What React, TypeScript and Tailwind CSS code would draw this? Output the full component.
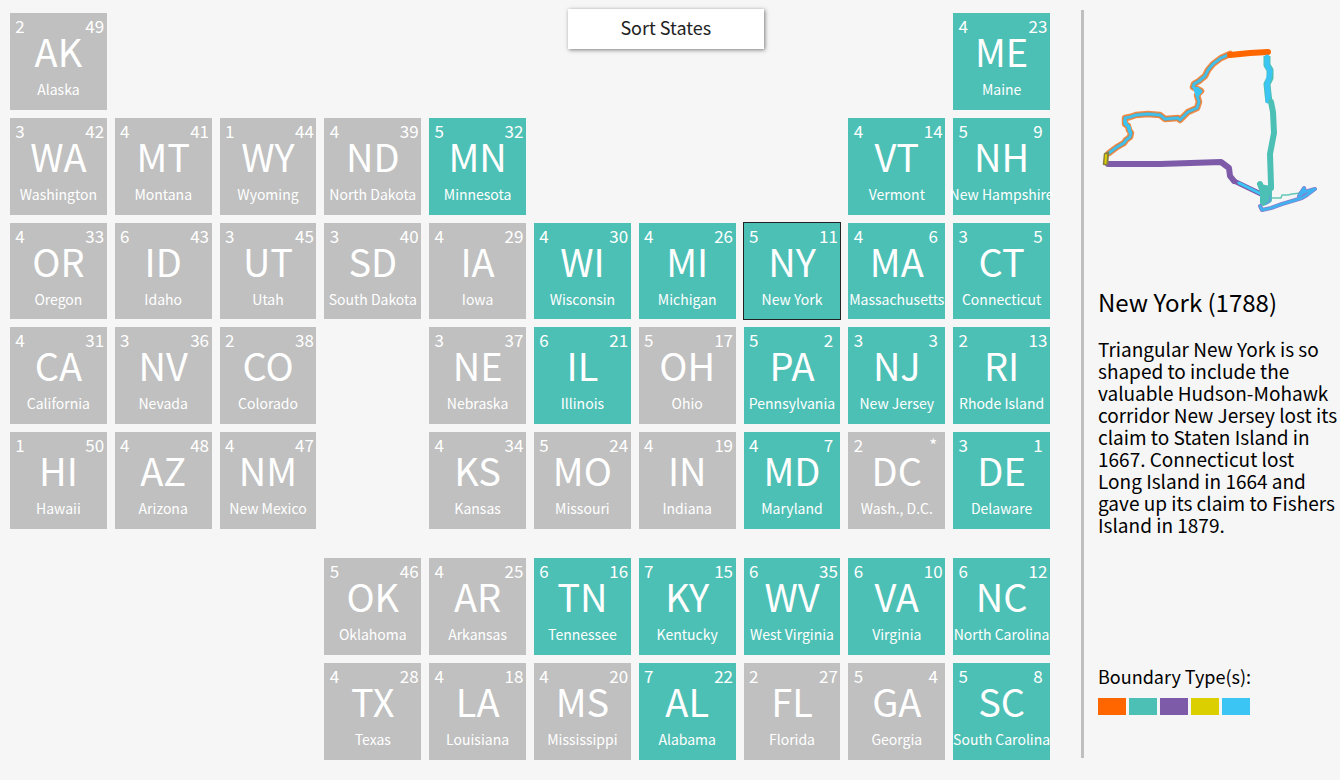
import React, { useState } from 'react';

type StateTile = {
  abbr: string;
  name: string;
  sides: number;
  order: string;
  row: number;
  col: number;
  active?: boolean;
};

const colStart = [
  'col-start-1',
  'col-start-2',
  'col-start-3',
  'col-start-4',
  'col-start-5',
  'col-start-6',
  'col-start-7',
  'col-start-8',
  'col-start-9',
  'col-start-10',
];

const rowStart = [
  'row-start-1',
  'row-start-2',
  'row-start-3',
  'row-start-4',
  'row-start-5',
];

const mainland: StateTile[] = [
  { abbr: 'AK', name: 'Alaska', sides: 2, order: '49', row: 1, col: 1 },
  { abbr: 'ME', name: 'Maine', sides: 4, order: '23', row: 1, col: 10, active: true },
  { abbr: 'WA', name: 'Washington', sides: 3, order: '42', row: 2, col: 1 },
  { abbr: 'MT', name: 'Montana', sides: 4, order: '41', row: 2, col: 2 },
  { abbr: 'WY', name: 'Wyoming', sides: 1, order: '44', row: 2, col: 3 },
  { abbr: 'ND', name: 'North Dakota', sides: 4, order: '39', row: 2, col: 4 },
  { abbr: 'MN', name: 'Minnesota', sides: 5, order: '32', row: 2, col: 5, active: true },
  { abbr: 'VT', name: 'Vermont', sides: 4, order: '14', row: 2, col: 9, active: true },
  { abbr: 'NH', name: 'New Hampshire', sides: 5, order: '9', row: 2, col: 10, active: true },
  { abbr: 'OR', name: 'Oregon', sides: 4, order: '33', row: 3, col: 1 },
  { abbr: 'ID', name: 'Idaho', sides: 6, order: '43', row: 3, col: 2 },
  { abbr: 'UT', name: 'Utah', sides: 3, order: '45', row: 3, col: 3 },
  { abbr: 'SD', name: 'South Dakota', sides: 3, order: '40', row: 3, col: 4 },
  { abbr: 'IA', name: 'Iowa', sides: 4, order: '29', row: 3, col: 5 },
  { abbr: 'WI', name: 'Wisconsin', sides: 4, order: '30', row: 3, col: 6, active: true },
  { abbr: 'MI', name: 'Michigan', sides: 4, order: '26', row: 3, col: 7, active: true },
  { abbr: 'NY', name: 'New York', sides: 5, order: '11', row: 3, col: 8, active: true },
  { abbr: 'MA', name: 'Massachusetts', sides: 4, order: '6', row: 3, col: 9, active: true },
  { abbr: 'CT', name: 'Connecticut', sides: 3, order: '5', row: 3, col: 10, active: true },
  { abbr: 'CA', name: 'California', sides: 4, order: '31', row: 4, col: 1 },
  { abbr: 'NV', name: 'Nevada', sides: 3, order: '36', row: 4, col: 2 },
  { abbr: 'CO', name: 'Colorado', sides: 2, order: '38', row: 4, col: 3 },
  { abbr: 'NE', name: 'Nebraska', sides: 3, order: '37', row: 4, col: 5 },
  { abbr: 'IL', name: 'Illinois', sides: 6, order: '21', row: 4, col: 6, active: true },
  { abbr: 'OH', name: 'Ohio', sides: 5, order: '17', row: 4, col: 7 },
  { abbr: 'PA', name: 'Pennsylvania', sides: 5, order: '2', row: 4, col: 8, active: true },
  { abbr: 'NJ', name: 'New Jersey', sides: 3, order: '3', row: 4, col: 9, active: true },
  { abbr: 'RI', name: 'Rhode Island', sides: 2, order: '13', row: 4, col: 10, active: true },
  { abbr: 'HI', name: 'Hawaii', sides: 1, order: '50', row: 5, col: 1 },
  { abbr: 'AZ', name: 'Arizona', sides: 4, order: '48', row: 5, col: 2 },
  { abbr: 'NM', name: 'New Mexico', sides: 4, order: '47', row: 5, col: 3 },
  { abbr: 'KS', name: 'Kansas', sides: 4, order: '34', row: 5, col: 5 },
  { abbr: 'MO', name: 'Missouri', sides: 5, order: '24', row: 5, col: 6 },
  { abbr: 'IN', name: 'Indiana', sides: 4, order: '19', row: 5, col: 7 },
  { abbr: 'MD', name: 'Maryland', sides: 4, order: '7', row: 5, col: 8, active: true },
  { abbr: 'DC', name: 'Wash., D.C.', sides: 2, order: '*', row: 5, col: 9 },
  { abbr: 'DE', name: 'Delaware', sides: 3, order: '1', row: 5, col: 10, active: true },
];

const south: StateTile[] = [
  { abbr: 'OK', name: 'Oklahoma', sides: 5, order: '46', row: 1, col: 4 },
  { abbr: 'AR', name: 'Arkansas', sides: 4, order: '25', row: 1, col: 5 },
  { abbr: 'TN', name: 'Tennessee', sides: 6, order: '16', row: 1, col: 6, active: true },
  { abbr: 'KY', name: 'Kentucky', sides: 7, order: '15', row: 1, col: 7, active: true },
  { abbr: 'WV', name: 'West Virginia', sides: 6, order: '35', row: 1, col: 8, active: true },
  { abbr: 'VA', name: 'Virginia', sides: 6, order: '10', row: 1, col: 9, active: true },
  { abbr: 'NC', name: 'North Carolina', sides: 6, order: '12', row: 1, col: 10, active: true },
  { abbr: 'TX', name: 'Texas', sides: 4, order: '28', row: 2, col: 4 },
  { abbr: 'LA', name: 'Louisiana', sides: 4, order: '18', row: 2, col: 5 },
  { abbr: 'MS', name: 'Mississippi', sides: 4, order: '20', row: 2, col: 6 },
  { abbr: 'AL', name: 'Alabama', sides: 7, order: '22', row: 2, col: 7, active: true },
  { abbr: 'FL', name: 'Florida', sides: 2, order: '27', row: 2, col: 8 },
  { abbr: 'GA', name: 'Georgia', sides: 5, order: '4', row: 2, col: 9 },
  { abbr: 'SC', name: 'South Carolina', sides: 5, order: '8', row: 2, col: 10, active: true },
];

const boundaryColors = [
  'bg-[#ff6600]',
  'bg-[#4dc0b5]',
  'bg-[#7d5ba9]',
  'bg-[#dccf00]',
  'bg-[#3bc5f5]',
];

// Lake Erie, Niagara, Lake Ontario and the St. Lawrence, west to east
const lakeShore =
  'M9 123L17 117L24 113L26 110L30 107L31 103L29 100L28 96L25 94L25 88L30 87L36 85L48 84L60 85L65 89L78 88L80 90L84 86L88 82L97 78L99 72L97 65L101 61L93 57L94 54L99 51L105 46L108 40L113 34L121 28L130 24';

const longIsland =
  'M160 176L162 180L171 178L182 174L192 171L202 168L207 165L215 159L208 161L200 164L204 158L205 161L199 166';

const Tile = ({
  state,
  selected,
  onSelect,
}: {
  state: StateTile;
  selected: boolean;
  onSelect: (abbr: string) => void;
}) => (
  <button
    type="button"
    aria-pressed={selected}
    onClick={() => onSelect(state.abbr)}
    className={`${colStart[state.col - 1]} ${rowStart[state.row - 1]} flex aspect-square min-w-0 flex-col items-center pt-1 text-white ${
      state.active ? 'bg-[#4dc0b5]' : 'bg-[#c0c0c0]'
    } ${selected ? 'outline outline-[#222]' : ''}`}
  >
    <span className="flex w-full justify-between pr-0.5 pl-1 text-[17px] leading-[18px]">
      <span className="w-3 text-center">{state.sides}</span>
      <span className="w-5 text-center">{state.order}</span>
    </span>
    <span className="text-[38px] leading-8">{state.abbr}</span>
    <span className="mt-3 text-sm leading-5 whitespace-nowrap">
      {state.name}
    </span>
  </button>
);

const NewYorkOutline = () => (
  <svg
    viewBox="0 0 240 200"
    className="w-full"
    fill="none"
    strokeLinecap="round"
    strokeLinejoin="round"
    role="img"
    aria-label="Outline of New York"
  >
    <path d={lakeShore} stroke="#f58a42" strokeWidth="6.5" />
    <path d={lakeShore} stroke="#8d9388" strokeWidth="3.8" />
    <path d={lakeShore} stroke="#3fc2ee" strokeWidth="2.4" />
    <path
      d="M94 58L98 58L101 62L97 67Z"
      fill="#3bc5f5"
      stroke="#3bc5f5"
      strokeWidth="2"
    />
    <path d="M25 91L26 94L29 97L30 102" stroke="#3bc5f5" strokeWidth="3.5" />
    {/* Northern line */}
    <path d="M130 25L150 23L168 22" stroke="#ff6600" strokeWidth="6" />
    {/* Lake Champlain and the eastern border */}
    <path
      d="M167 26L167 35L170 40L170 48L167 54L168 64L169 72"
      stroke="#4dc0b5"
      strokeWidth="7"
      strokeLinecap="butt"
    />
    <path
      d="M167 27L167 35L170 41L169 48L167 54L168 64L168 71"
      stroke="#3bc5f5"
      strokeWidth="5"
    />
    <path
      d="M171 72L173 82L174 103L170 124L171 155L171 158"
      stroke="#4dc0b5"
      strokeWidth="6"
    />
    {/* Pennsylvania line */}
    <path
      d="M8 134L60 134L121 132L125 135L129 138L130 146L134 151"
      stroke="#7d5ba9"
      strokeWidth="6"
    />
    <path d="M134 151L161 164" stroke="#7d5ba9" strokeWidth="5" />
    <path d="M139 153L161 164" stroke="#3bc5f5" strokeWidth="3" />
    {/* Erie triangle */}
    <path
      d="M5 124L8 123L7 134L4 134Z"
      fill="#dccf00"
      stroke="#8a8043"
      strokeWidth="2.5"
    />
    <path d="M6 125L5.5 133" stroke="#dccf00" strokeWidth="2" />
    {/* New York harbour */}
    <path
      d="M160 154L163 162L163 173L169 170L169 160L171 156"
      fill="#4dc0b5"
      stroke="#4dc0b5"
      strokeWidth="6"
    />
    <path d="M170 167L170 171L166 174" stroke="#5aa5d8" strokeWidth="2" />
    {/* Long Island */}
    <path
      d="M172 168L181 168L182 165L188 165L192 164L201 163"
      stroke="#63c7b7"
      strokeWidth="1.5"
    />
    <path d={longIsland} stroke="#8a7dcc" strokeWidth="4" />
    <path d={longIsland} stroke="#3fb3f0" strokeWidth="2.4" />
  </svg>
);

const App = () => {
  const [selected, setSelected] = useState('NY');
  const [faded, setFaded] = useState(false);

  const renderTile = (state: StateTile) => (
    <Tile
      key={state.abbr}
      state={faded ? { ...state, active: false } : state}
      selected={selected === state.abbr}
      onSelect={setSelected}
    />
  );

  return (
    <div className="flex min-h-screen w-full bg-[#f6f6f6] font-['Noto_Sans_CJK_SC',sans-serif]">
      <main className="min-w-0 flex-1 pt-[13px] pr-[31px] pb-5 pl-2.5">
        <div className="grid grid-cols-10 gap-2">
          <button
            type="button"
            onClick={() => setFaded((prev) => !prev)}
            className="col-span-2 col-start-6 row-start-1 -mt-1 -mr-7 ml-[34px] h-10 self-start bg-white pb-1 text-lg text-[#222] shadow-[1px_1px_4px_rgba(0,0,0,0.5)]"
          >
            Sort States
          </button>
          {mainland.map(renderTile)}
        </div>
        <div className="mt-[29px] grid grid-cols-10 gap-2">
          {south.map(renderTile)}
        </div>
      </main>

      <aside className="mt-2.5 mb-[22px] flex w-[259px] shrink-0 flex-col border-l-3 border-[#bfbfbf] text-black">
        <div className="pt-5 pl-4">
          <NewYorkOutline />
        </div>
        <div className="pt-14 pl-3.5">
          <h1 className="text-2xl leading-8">New York (1788)</h1>
          <p className="mt-5 text-[19px] leading-[22px]">
            Triangular New York is so shaped to include the valuable
            Hudson-Mohawk corridor New Jersey lost its claim to Staten Island in
            1667. Connecticut lost Long Island in 1664 and gave up its claim to
            Fishers Island in 1879.
          </p>
        </div>
        <div className="mt-auto pb-[43px] pl-3.5">
          <h2 className="text-lg leading-6">Boundary Type(s):</h2>
          <ul className="mt-2.5 flex gap-[3px]">
            {boundaryColors.map((color) => (
              <li key={color} className={`h-[17px] w-7 ${color}`} />
            ))}
          </ul>
        </div>
      </aside>
    </div>
  );
};

export default App;
